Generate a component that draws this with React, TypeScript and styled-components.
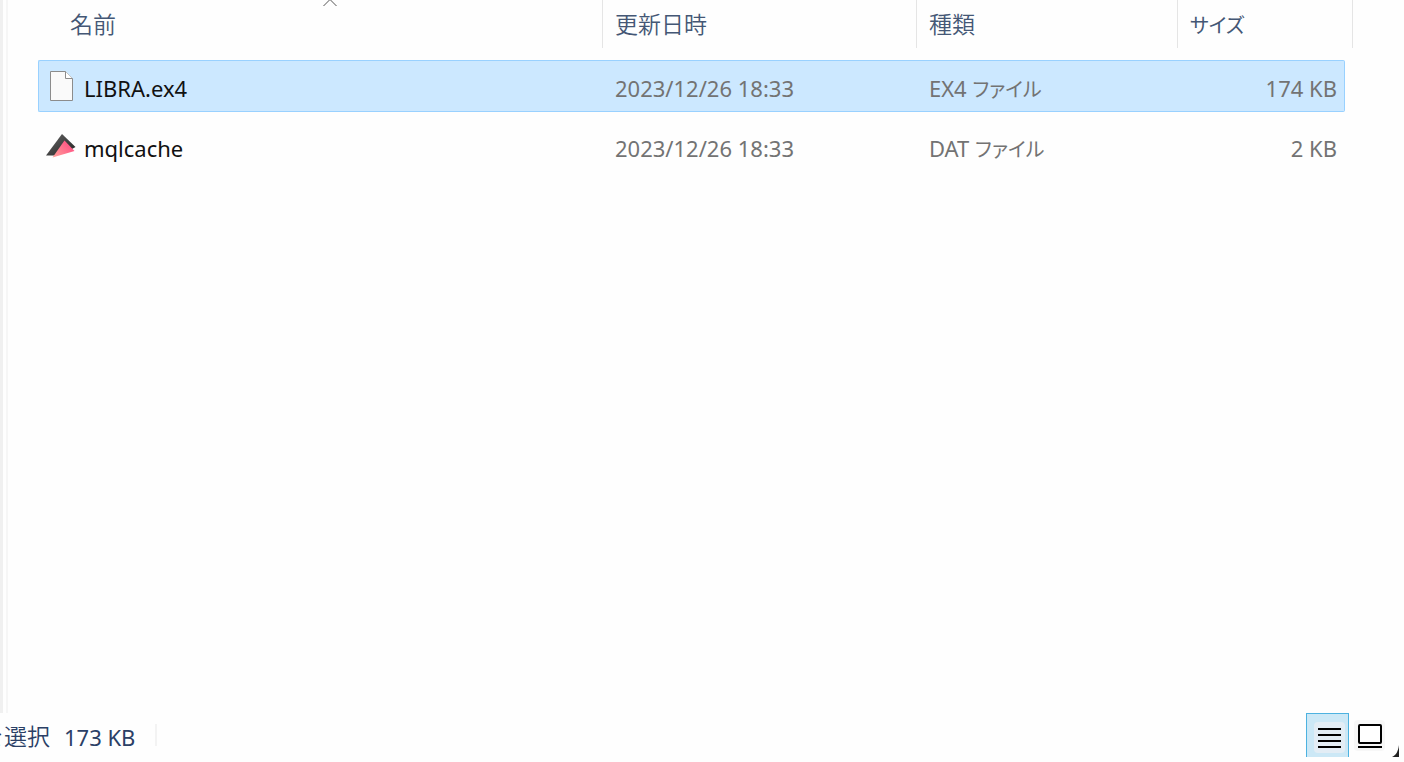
import React from "react";
import styled, { createGlobalStyle } from "styled-components";

const GlobalStyle = createGlobalStyle`
  * { box-sizing: border-box; }
  body {
    margin: 0;
    background: #fefefe;
    font-family: "Noto Sans", "Noto Sans CJK JP", sans-serif;
    font-size: 22px;
    line-height: 32px;
  }
`;

const Window = styled.div`
  display: flex;
  flex-direction: column;
  min-height: 100vh;
  padding-bottom: 5px;
  overflow: hidden;
`;

const Body = styled.main`
  flex: 1;
  display: flex;
`;

const PaneEdge = styled.div`
  width: 8px;
  flex: none;
  border-left: 3px solid #f0f0f0;
  border-right: 2px solid #f6f6f6;
`;

const ListPane = styled.div`
  flex: 1;
  padding: 0 51px 0 30px;
`;

const FileTable = styled.table`
  width: 100%;
  table-layout: fixed;
  border-collapse: separate;
  border-spacing: 0;
`;

const Col = styled.col<{ $w?: number }>`
  width: ${(p) => (p.$w ? `${p.$w}px` : "auto")};
`;

const HeadCell = styled.th`
  padding: 0 0 12px;
  font-weight: 350;
  text-align: left;
`;

const HeadLabel = styled.div<{ $first?: boolean }>`
  position: relative;
  height: 48px;
  margin-left: ${(p) => (p.$first ? 20 : 0)}px;
  padding: 7px 12px;
  border-right: 1px solid #e5e5e5;
  color: #445775;
  font-family: "Noto Sans CJK JP", sans-serif;
  font-size: 23px;
`;

const SortMark = styled.svg`
  position: absolute;
  top: 0;
  left: 50%;
  width: 14px;
  height: 6px;
  margin-left: -7px;
`;

const Cell = styled.td`
  padding: 0 0 8px;
`;

type BoxProps = { $selected?: boolean; $edge?: "start" | "end"; $strong?: boolean };

const CellBox = styled.div<BoxProps>`
  display: flex;
  align-items: center;
  justify-content: ${(p) => (p.$edge === "end" ? "flex-end" : "flex-start")};
  height: 52px;
  padding: 0 7px 0 ${(p) => (p.$edge === "start" ? 7 : 12)}px;
  white-space: pre;
  color: ${(p) => (p.$strong ? "#111111" : "#737373")};
  background: ${(p) => (p.$selected ? "#cce8ff" : "transparent")};
  border: 0 solid ${(p) => (p.$selected ? "#99d1ff" : "transparent")};
  border-width: 1px ${(p) => (p.$edge === "end" ? 1 : 0)}px 1px ${(p) => (p.$edge === "start" ? 1 : 0)}px;
  border-radius: ${(p) => (p.$edge === "start" ? "2px 0 0 2px" : p.$edge === "end" ? "0 2px 2px 0" : "0")};
`;

const CellText = styled.span`
  padding-top: 4px;
`;

const Kana = styled.span`
  font-family: "Noto Sans CJK JP", sans-serif;
  font-size: 20px;
  font-weight: 400;
  font-feature-settings: "palt";
`;

const FileIcon = styled.svg`
  flex: none;
  width: 30px;
  height: 32px;
  margin-right: 8px;
`;

const StatusBar = styled.footer`
  display: flex;
  align-items: center;
  height: 44px;
  color: #2b4066;
`;

const StatusText = styled.span`
  margin-left: -19px;
  font-family: "Noto Sans CJK JP", sans-serif;
  font-size: 23px;
  font-weight: 350;
`;

const StatusSize = styled.span`
  margin-left: 14px;
  padding: 3px 20px 0 0;
`;

const Divider = styled.span`
  width: 2px;
  height: 22px;
  background: #f3f3f3;
`;

const Views = styled.div`
  display: flex;
  align-items: stretch;
  height: 44px;
  margin-left: auto;
  padding-right: 5px;
`;

const ViewButton = styled.button<{ $active?: boolean }>`
  width: 43px;
  padding: 0;
  background: ${(p) => (p.$active ? "#cce8f6" : "transparent")};
  border: 1px solid ${(p) => (p.$active ? "#4db2e0" : "transparent")};
  border-bottom: 0;
  svg { display: block; }
`;

const Grip = styled.svg`
  align-self: flex-end;
  width: 7px;
  height: 13px;
`;

const DocumentIcon = () => (
  <FileIcon viewBox="0 0 30 32" aria-hidden="true">
    <path d="M4.5 1.5H19.5L26.5 8.5V30.5H4.5Z" fill="#fafafa" stroke="#8c8c8c" />
    <path d="M19.5 1.5V8.5H26.5" fill="#fff" stroke="#8c8c8c" />
  </FileIcon>
);

const CacheIcon = () => (
  <FileIcon viewBox="0 0 30 32" aria-hidden="true">
    <defs>
      <linearGradient id="pink" x1="0" y1="1" x2="1" y2="0.3">
        <stop offset="0" stopColor="#ffa39b" />
        <stop offset="1" stopColor="#ff4d82" />
      </linearGradient>
      <linearGradient id="slate" x1="0" y1="0" x2="1" y2="1">
        <stop offset="0" stopColor="#666" />
        <stop offset="1" stopColor="#222" />
      </linearGradient>
    </defs>
    <path d="M16 4L29.5 17L26 19L9 25.5H0Z" fill="url(#slate)" />
    <path d="M18.5 10.5L28.5 21L6.5 27.5Z" fill="url(#pink)" />
  </FileIcon>
);

const files = [
  { name: "LIBRA.ex4", date: "2023/12/26 18:33", ext: "EX4", size: "174 KB", selected: true, Icon: DocumentIcon },
  { name: "mqlcache", date: "2023/12/26 18:33", ext: "DAT", size: "2 KB", selected: false, Icon: CacheIcon },
];

export default function App() {
  return (
    <Window>
      <GlobalStyle />
      <Body>
        <PaneEdge />
        <ListPane>
          <FileTable>
            <colgroup>
              <Col />
              <Col $w={314} />
              <Col $w={261} />
              <Col $w={167} />
              <Col $w={8} />
            </colgroup>
            <thead>
              <tr>
                <HeadCell scope="col" aria-sort="ascending">
                  <HeadLabel $first>
                    名前
                    <SortMark viewBox="0 0 14 6" aria-hidden="true">
                      <path d="M0.5 6L7 -0.5L13.5 6" fill="none" stroke="#555" />
                    </SortMark>
                  </HeadLabel>
                </HeadCell>
                <HeadCell scope="col"><HeadLabel>更新日時</HeadLabel></HeadCell>
                <HeadCell scope="col"><HeadLabel>種類</HeadLabel></HeadCell>
                <HeadCell scope="col" colSpan={2}><HeadLabel><Kana>サイズ</Kana></HeadLabel></HeadCell>
              </tr>
            </thead>
            <tbody>
              {files.map(({ name, date, ext, size, selected, Icon }) => (
                <tr key={name} aria-selected={selected}>
                  <Cell>
                    <CellBox $selected={selected} $edge="start" $strong>
                      <Icon />
                      <CellText>{name}</CellText>
                    </CellBox>
                  </Cell>
                  <Cell><CellBox $selected={selected}><CellText>{date}</CellText></CellBox></Cell>
                  <Cell>
                    <CellBox $selected={selected}>
                      <CellText>{ext} <Kana>ファイル</Kana></CellText>
                    </CellBox>
                  </Cell>
                  <Cell><CellBox $selected={selected} $edge="end"><CellText>{size}</CellText></CellBox></Cell>
                </tr>
              ))}
            </tbody>
          </FileTable>
        </ListPane>
      </Body>
      <StatusBar>
        <StatusText>を選択</StatusText>
        <StatusSize>173 KB</StatusSize>
        <Divider />
        <Views>
          <ViewButton $active aria-label="詳細" aria-pressed="true">
            <svg width="41" height="43" viewBox="0 0 41 43">
              <rect x="7" y="8" width="31" height="31" rx="4" fill="#e3edf5" />
              <path d="M11 15H34M11 21H34M11 27H34M11 33H34" stroke="#000" strokeWidth="2" />
            </svg>
          </ViewButton>
          <ViewButton aria-label="大アイコン" aria-pressed="false">
            <svg width="41" height="43" viewBox="0 0 41 43">
              <rect x="4" y="6" width="31" height="31" rx="4" fill="#f7f7f7" />
              <rect x="9" y="11" width="22" height="18" rx="1" fill="#fff" stroke="#000" strokeWidth="2" />
              <path d="M8 33H32" stroke="#000" strokeWidth="2" />
            </svg>
          </ViewButton>
          <Grip viewBox="0 0 7 13" aria-hidden="true">
            <path d="M7 1V13H0C4 11 6 8 7 1Z" fill="#222" />
          </Grip>
        </Views>
      </StatusBar>
    </Window>
  );
}
